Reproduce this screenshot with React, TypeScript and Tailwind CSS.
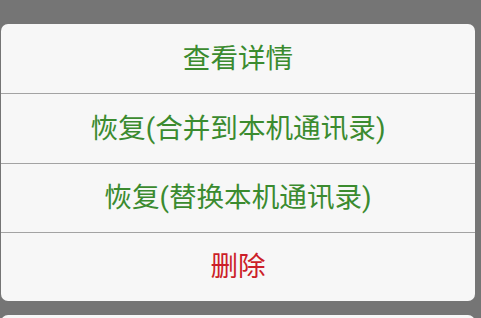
import React from "react";

const items = [
  { label: "查看详情", color: "text-[#3b8b2f]", h: "h-[70px] border-b border-[#a3a3a3]" },
  { label: "恢复(合并到本机通讯录)", color: "text-[#3b8b2f]", h: "h-[70px] border-b border-[#a3a3a3]" },
  { label: "恢复(替换本机通讯录)", color: "text-[#3b8b2f]", h: "h-[69px] border-b border-[#a3a3a3]" },
  { label: "删除", color: "text-[#cc1f29]", h: "h-[68px]" },
];

export default function App() {
  return (
    <div
      className="w-[481px] h-[318px] overflow-hidden bg-[#757575] pt-[24px] pl-[1px]"
      style={{ fontFamily: 'Roboto, "Noto Sans CJK SC", sans-serif' }}
    >
      <div className="w-[474px] rounded-[7px] bg-[#f7f7f7] overflow-hidden">
        {items.map((it, i) => (
          <div
            key={i}
            className={`${it.h} flex items-center justify-center text-[27.6px] leading-none ${it.color}`}
          >
            {it.label}
          </div>
        ))}
      </div>
      <div className="mt-[14px] w-[474px] h-[40px] rounded-[7px] bg-[#f7f7f7]" />
    </div>
  );
}
